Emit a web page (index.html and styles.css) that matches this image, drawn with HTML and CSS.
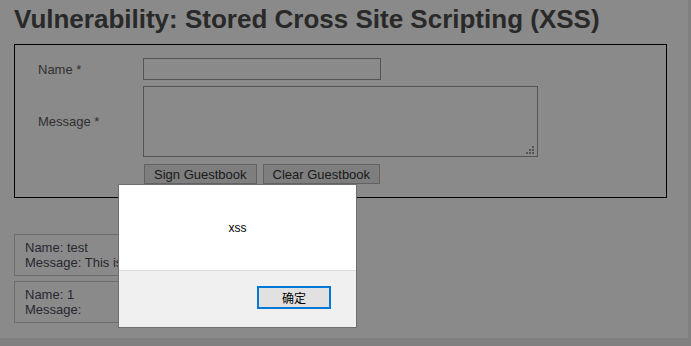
FILE: index.html
```html
<!DOCTYPE html>
<html lang="en">
<head>
    <meta charset="UTF-8">
    <meta name="viewport" content="width=device-width, initial-scale=1.0">
    <title>Vulnerability: Stored Cross Site Scripting (XSS)</title>
    <link rel="stylesheet" href="styles.css">
</head>
<body>

    <div class="page">
        <h1>Vulnerability: Stored Cross Site Scripting (XSS)</h1>

        <!-- Guestbook form -->
        <div class="vulnerable-code-area">
            <form class="guestbook-form" name="guestform">
                <label class="field-label" for="txtName">Name *</label>
                <input id="txtName" class="name-input" type="text" name="txtName" maxlength="10">

                <label class="field-label" for="mtxMessage">Message *</label>
                <div class="message-wrap">
                    <textarea id="mtxMessage" class="message-input" name="mtxMessage"></textarea>
                </div>

                <span></span>
                <div class="form-buttons">
                    <button type="button" class="btn">Sign Guestbook</button>
                    <button type="button" class="btn">Clear Guestbook</button>
                </div>
            </form>
        </div>

        <!-- Stored comments -->
        <div class="guestbook-comments">
            <div class="comment">Name: test<br>Message: This is a test comment.</div>
            <div class="comment">Name: 1<br>Message: </div>
        </div>
    </div>

    <!-- Browser alert dialog -->
    <div class="overlay"></div>
    <div class="alert-box">
        <div class="alert-body">xss</div>
        <div class="alert-footer">
            <button type="button" class="alert-ok">确定</button>
        </div>
    </div>

</body>
</html>
```

FILE: styles.css
```css
/* Page base */
html {
    background-color: #ececec;
}

body {
    margin: 0;
    padding: 0;
    font-family: "Liberation Sans", Arial, sans-serif;
    font-size: 13px;
}

.page {
    width: 688px;
    height: 338px;
    background-color: #fff;
    padding-left: 14px;
    box-sizing: border-box;
    overflow: hidden;
}

h1 {
    margin: 4px 0 0 0;
    font-size: 26px;
    line-height: 30px;
    font-weight: bold;
    color: #4c4c4c;
}

/* Form box */
.vulnerable-code-area {
    width: 653px;
    margin-top: 10px;
    border: 1px solid #000;
    box-sizing: border-box;
    padding: 13px 0 13px 23px;
}

.guestbook-form {
    display: grid;
    grid-template-columns: 105px auto;
    row-gap: 6px;
    align-items: center;
}

.field-label {
    color: #5a5a5a;
}

.name-input {
    width: 238px;
    height: 22px;
    margin: 0;
    border: 1px solid #9a9a9a;
    box-sizing: border-box;
    background-color: #fff;
}

.message-wrap {
    position: relative;
    width: 395px;
    height: 71px;
}

.message-input {
    display: block;
    width: 395px;
    height: 71px;
    margin: 0;
    border: 1px solid #9a9a9a;
    box-sizing: border-box;
    background-color: #fff;
    font-family: "Liberation Mono", monospace;
    resize: none;
}

/* Resize grip dots */
.message-wrap::after {
    content: "";
    position: absolute;
    right: 4px;
    bottom: 3px;
    width: 2px;
    height: 2px;
    background-color: #9a9a9a;
    box-shadow: 0 -3px #9a9a9a, 0 -6px #9a9a9a, -3px 0 #9a9a9a, -3px -3px #9a9a9a, -6px 0 #9a9a9a;
}

.form-buttons {
    display: flex;
    gap: 6px;
    margin: 1px 0 0 1px;
}

.btn {
    height: 20px;
    padding: 0 9px;
    margin: 0;
    font-family: "Liberation Sans", Arial, sans-serif;
    font-size: 13px;
    color: #333;
    background-color: #e9e9e9;
    border: 1px solid #b5b5b5;
}

/* Comments */
.guestbook-comments {
    margin-top: 36px;
}

.comment {
    width: 290px;
    margin-bottom: 5px;
    padding: 5px 10px;
    border: 1px solid #c8c8c8;
    box-sizing: border-box;
    line-height: 15px;
    color: #4a4a5c;
}

/* Alert dialog */
.overlay {
    position: fixed;
    top: 0;
    left: 0;
    width: 100%;
    height: 100%;
    background-color: rgba(0, 0, 0, 0.46);
}

.alert-box {
    position: fixed;
    top: 184px;
    left: 118px;
    width: 239px;
    height: 144px;
    border: 1px solid #6e6e6e;
    box-sizing: border-box;
    background-color: #f0f0f0;
    display: flex;
    flex-direction: column;
}

.alert-body {
    height: 86px;
    background-color: #fff;
    border-bottom: 1px solid #dfdfdf;
    display: flex;
    justify-content: center;
    align-items: center;
    font-size: 12px;
    color: #000;
    padding-top: 1px;
    box-sizing: border-box;
}

.alert-footer {
    display: flex;
    justify-content: flex-end;
    padding: 15px 25px 0 0;
}

.alert-ok {
    width: 74px;
    height: 23px;
    margin: 0;
    padding: 0;
    background-color: #e1e1e1;
    border: 2px solid #0078d7;
    font-family: "Liberation Sans", "Noto Sans CJK SC", sans-serif;
    font-size: 12px;
    color: #000;
}
```
